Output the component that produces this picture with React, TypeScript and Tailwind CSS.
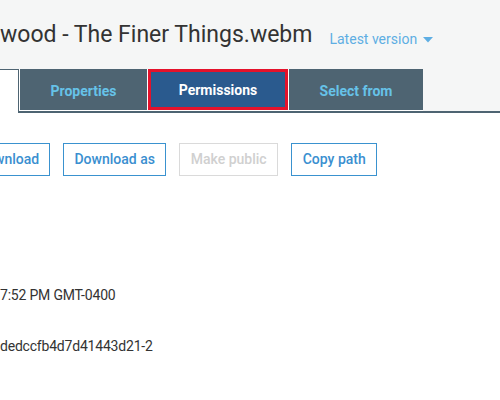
import React from "react";

export default function App() {
  return (
    <div className="w-[500px] h-[400px] overflow-hidden bg-white font-['Roboto',sans-serif] text-[#333]">
      <div className="bg-[#f5f6f6]">
        <div className="flex items-start h-[69px] whitespace-nowrap">
          <div className="pt-[21px] text-[23px] leading-[28px] text-[#333]">wood - The Finer Things.webm</div>
          <div className="ml-[17px] pt-[29px] flex items-center text-[14px] leading-[20px] text-[#5eaee3]">
            <span>Latest version</span>
            <svg width="10" height="6" viewBox="0 0 10 6" className="ml-[6px] mt-[1px]">
              <path d="M0 0 L10 0 L5 5.5 Z" fill="#5eaee3" />
            </svg>
          </div>
        </div>
        <div className="flex h-[44px]">
          <div className="w-[19px] h-[44px] bg-white border-t border-r border-[#4e6472]" />
          <div className="flex flex-1 border-b-2 border-[#4e6472]">
            <div className="flex border-b border-white border-l">
              <div className="flex items-center justify-center w-[128px] h-[41px] pt-[3px] bg-[#4e6472] text-[#66c2e8] text-[14px] font-bold border-r border-white">
                Properties
              </div>
              <div className="flex items-center justify-center w-[140px] h-[41px] pt-[1px] bg-[#2a5a8e] text-white text-[14px] font-bold border-[3px] border-[#e4122b]">
                Permissions
              </div>
              <div className="flex items-center justify-center w-[135px] h-[41px] pt-[3px] bg-[#4e6472] text-[#66c2e8] text-[14px] font-bold border-l border-white">
                Select from
              </div>
            </div>
          </div>
        </div>
      </div>
      <div className="flex gap-[13px] mt-[30px] whitespace-nowrap">
        <div className="-ml-[34px] h-[33px] px-[10px] flex items-center border border-[#3a92cf] text-[#3a8fd0] text-[14px] font-medium">Download</div>
        <div className="h-[33px] w-[103px] justify-center flex items-center border border-[#3a92cf] text-[#3a8fd0] text-[14px] font-medium">Download as</div>
        <div className="h-[33px] w-[99px] justify-center flex items-center border border-[#dadada] text-[#d0d0d0] text-[14px] font-medium">Make public</div>
        <div className="h-[33px] w-[86px] justify-center flex items-center border border-[#3a92cf] text-[#3a8fd0] text-[14px] font-medium">Copy path</div>
      </div>
      <div className="mt-[109px] text-[14px] leading-[20px] tracking-[-0.2px] whitespace-nowrap">7:52 PM GMT-0400</div>
      <div className="mt-[31px] text-[14px] leading-[20px] tracking-[-0.2px] whitespace-nowrap">dedccfb4d7d41443d21-2</div>
    </div>
  );
}
